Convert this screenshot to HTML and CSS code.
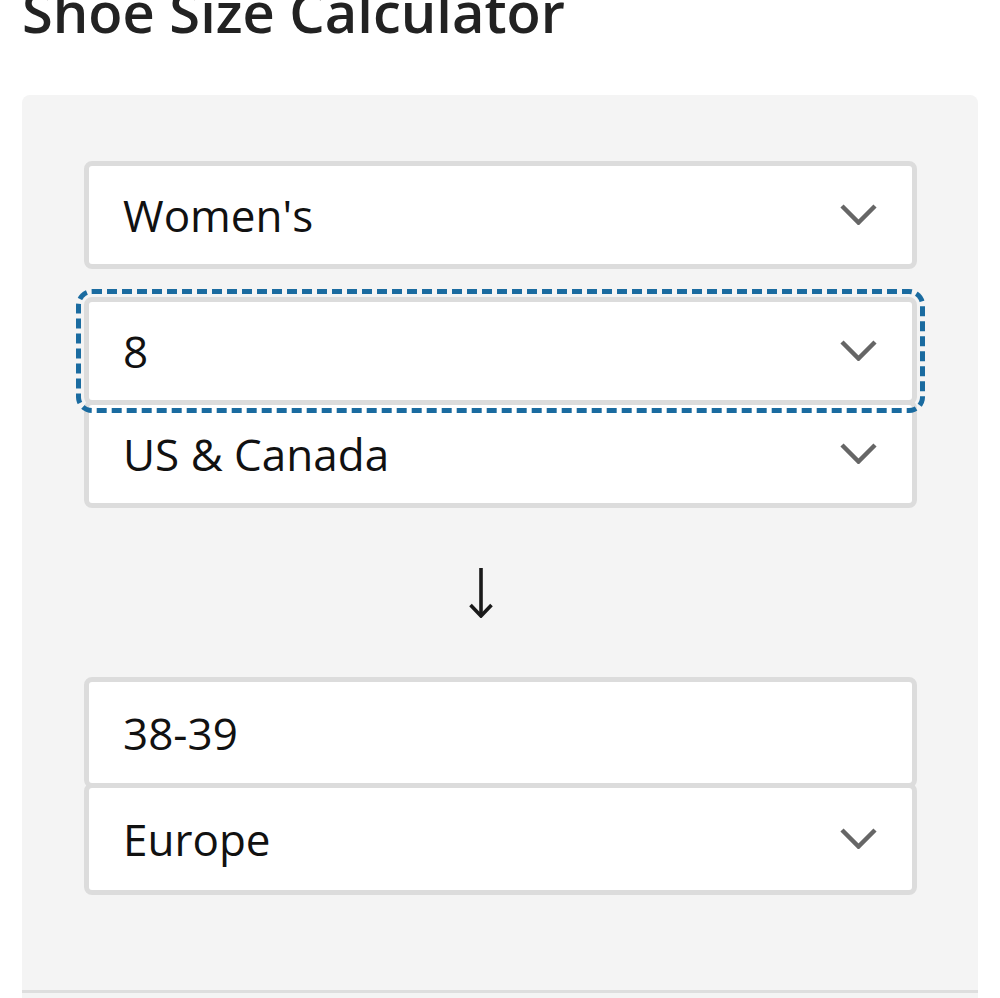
FILE: index.html
```html
<!DOCTYPE html>
<html lang="en">
<head>
<meta charset="utf-8">
<title>Shoe Size Calculator</title>
<link rel="stylesheet" href="styles.css">
</head>
<body>
<main class="page">
  <h1 class="title">Shoe Size Calculator</h1>
  <section class="card">
    <div class="form">
      <div class="field select">
        <span class="value">Women's</span>
        <svg class="chev" width="37" height="21" viewBox="0 0 37 21"><path d="M2 2 L18.5 18.5 L35 2" fill="none" stroke="#666" stroke-width="4.5"/></svg>
      </div>
      <div class="group">
        <div class="field select focused">
          <span class="value">8</span>
          <svg class="chev" width="37" height="21" viewBox="0 0 37 21"><path d="M2 2 L18.5 18.5 L35 2" fill="none" stroke="#666" stroke-width="4.5"/></svg>
        </div>
        <div class="field select joined">
          <span class="value">US &amp; Canada</span>
          <svg class="chev" width="37" height="21" viewBox="0 0 37 21"><path d="M2 2 L18.5 18.5 L35 2" fill="none" stroke="#666" stroke-width="4.5"/></svg>
        </div>
      </div>
      <div class="arrow">
        <svg width="24" height="51" viewBox="0 0 24 51"><path d="M12 1 V48" fill="none" stroke="#1a1a1a" stroke-width="3.6"/><path d="M1.5 38 L12 49 L22.5 38" fill="none" stroke="#1a1a1a" stroke-width="3.6"/></svg>
      </div>
      <div class="group result">
        <div class="field output">
          <span class="value">38-39</span>
        </div>
        <div class="field select joined tall">
          <span class="value">Europe</span>
          <svg class="chev" width="37" height="21" viewBox="0 0 37 21"><path d="M2 2 L18.5 18.5 L35 2" fill="none" stroke="#666" stroke-width="4.5"/></svg>
        </div>
      </div>
    </div>
    <div class="results"></div>
  </section>
</main>
</body>
</html>
```
FILE: styles.css
```css
html, body {
  margin: 0;
  padding: 0;
  background: #ffffff;
}
body {
  font-family: "Open Sans", "Noto Sans", sans-serif;
  color: #111;
  overflow: hidden;
}
.page {
  padding: 0 22px;
}
.title {
  font-family: "Open Sans", sans-serif;
  font-weight: 600;
  font-size: 56px;
  line-height: 70px;
  color: #222;
  margin: -24px 0 49px 0;
  white-space: nowrap;
}
.card {
  background: #f4f4f4;
  border-radius: 8px 8px 0 0;
}
.form {
  padding: 66px 61px 95px 62px;
  display: flex;
  flex-direction: column;
}
.group {
  display: flex;
  flex-direction: column;
  margin-top: 28px;
}
.group.result {
  margin-top: 0;
}
.field {
  box-sizing: border-box;
  height: 108px;
  background: #fff;
  border: 5px solid #dcdcdc;
  border-radius: 8px;
  padding: 0 35px 0 34px;
  display: flex;
  align-items: center;
  justify-content: space-between;
  position: relative;
}
.value {
  font-size: 44px;
  color: #111;
  line-height: 58px;
}
.chev {
  display: block;
  margin-top: -2px;
}
.joined {
  margin-top: -5px;
}
.output {
  height: 111px;
}
.tall {
  height: 112px;
}
.focused {
  outline: 5px dashed #1a6ba0;
  outline-offset: 3px;
  z-index: 1;
}
.arrow {
  display: flex;
  justify-content: center;
  padding-right: 39px;
  margin: 59px 0 59px;
}
.arrow svg {
  display: block;
}
.results {
  border-top: 3px solid #dedede;
  height: 40px;
}
```
